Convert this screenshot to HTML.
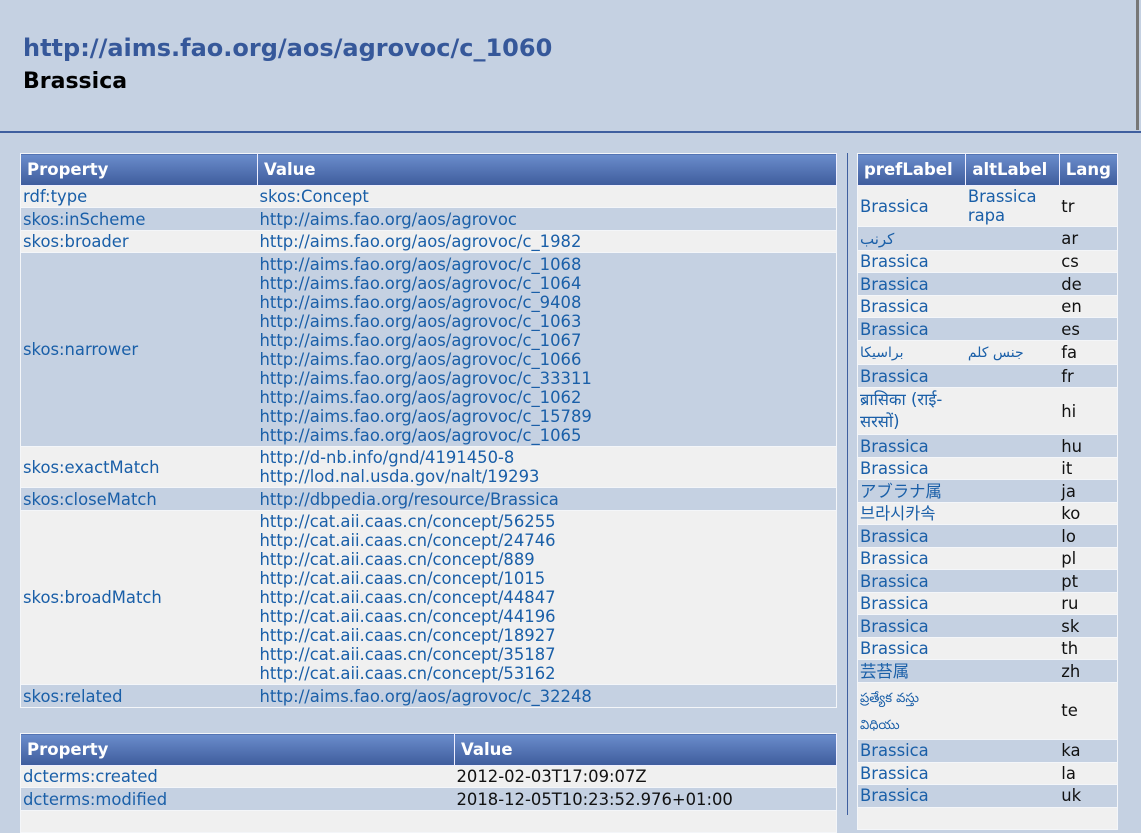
<!DOCTYPE html>
<html><head><meta charset="utf-8">
<style>
html,body{margin:0;padding:0;background:#c5d1e2;overflow:hidden;width:1141px;height:815px}
body{font-family:"DejaVu Sans","Liberation Sans","Noto Sans CJK JP",sans-serif;font-size:16.4px;color:#111}
#hd{height:131px;border-bottom:2px solid #3f5f9f;position:relative}
#hd .u{position:absolute;left:23px;top:34px;font-size:24px;font-weight:bold;color:#36589a}
#hd .t{position:absolute;left:23px;top:69px;font-size:22px;font-weight:bold;color:#000}
table{border-collapse:collapse;position:absolute;border:1px solid #f4f6f9}
th{background:linear-gradient(#6b8dcc,#3e5c9c);color:#fff;text-align:left;font-weight:bold;font-size:16.5px;height:31px;padding:0 6px;border-right:1px solid #eef;border-bottom:1px solid #eef}
td{padding:1.3px 2px 1.2px;line-height:19px;border-bottom:1px solid #f4f6f9;vertical-align:middle}
tr.o td{background:#f0f0f0}
tr.e td{background:#c5d1e2}
a{color:#1a5fa8;text-decoration:none}
#vl{position:absolute;left:847px;top:153px;width:1px;height:662px;background:#3f5f9f}
#sb{position:absolute;left:1136px;top:0;width:3px;height:130px;background:#777}
</style></head><body>
<div id="hd"><div class="u">http://aims.fao.org/aos/agrovoc/c_1060</div><div class="t">Brassica</div></div>
<div id="sb"></div>
<table style="left:20px;top:153px;width:817px">
<tr><th style="width:224px">Property</th><th>Value</th></tr>
<tr class="o"><td><a>rdf:type</a></td><td><a>skos:Concept</a></td></tr>
<tr class="e"><td><a>skos:inScheme</a></td><td><a>http://aims.fao.org/aos/agrovoc</a></td></tr>
<tr class="o"><td><a>skos:broader</a></td><td><a>http://aims.fao.org/aos/agrovoc/c_1982</a></td></tr>
<tr class="e"><td><a>skos:narrower</a></td><td><a>http://aims.fao.org/aos/agrovoc/c_1068</a><br><a>http://aims.fao.org/aos/agrovoc/c_1064</a><br><a>http://aims.fao.org/aos/agrovoc/c_9408</a><br><a>http://aims.fao.org/aos/agrovoc/c_1063</a><br><a>http://aims.fao.org/aos/agrovoc/c_1067</a><br><a>http://aims.fao.org/aos/agrovoc/c_1066</a><br><a>http://aims.fao.org/aos/agrovoc/c_33311</a><br><a>http://aims.fao.org/aos/agrovoc/c_1062</a><br><a>http://aims.fao.org/aos/agrovoc/c_15789</a><br><a>http://aims.fao.org/aos/agrovoc/c_1065</a></td></tr>
<tr class="o"><td><a>skos:exactMatch</a></td><td><a>http://d-nb.info/gnd/4191450-8</a><br><a>http://lod.nal.usda.gov/nalt/19293</a></td></tr>
<tr class="e"><td><a>skos:closeMatch</a></td><td><a>http://dbpedia.org/resource/Brassica</a></td></tr>
<tr class="o"><td><a>skos:broadMatch</a></td><td><a>http://cat.aii.caas.cn/concept/56255</a><br><a>http://cat.aii.caas.cn/concept/24746</a><br><a>http://cat.aii.caas.cn/concept/889</a><br><a>http://cat.aii.caas.cn/concept/1015</a><br><a>http://cat.aii.caas.cn/concept/44847</a><br><a>http://cat.aii.caas.cn/concept/44196</a><br><a>http://cat.aii.caas.cn/concept/18927</a><br><a>http://cat.aii.caas.cn/concept/35187</a><br><a>http://cat.aii.caas.cn/concept/53162</a></td></tr>
<tr class="e"><td><a>skos:related</a></td><td><a>http://aims.fao.org/aos/agrovoc/c_32248</a></td></tr>
</table>
<table style="left:20px;top:733px;width:817px">
<tr><th style="width:421px">Property</th><th>Value</th></tr>
<tr class="o"><td><a>dcterms:created</a></td><td>2012-02-03T17:09:07Z</td></tr>
<tr class="e"><td><a>dcterms:modified</a></td><td>2018-12-05T10:23:52.976+01:00</td></tr>
<tr class="o"><td>&nbsp;</td><td></td></tr>
</table>
<div id="vl"></div>
<table style="left:857px;top:153px;width:261px">
<tr><th style="width:96px">prefLabel</th><th style="width:81px">altLabel</th><th>Lang</th></tr>
<tr class="o"><td><a>Brassica</a></td><td><a>Brassica rapa</a></td><td>tr</td></tr>
<tr class="e"><td><a style="font-size:15px">كرنب</a></td><td></td><td>ar</td></tr>
<tr class="o"><td><a>Brassica</a></td><td></td><td>cs</td></tr>
<tr class="e"><td><a>Brassica</a></td><td></td><td>de</td></tr>
<tr class="o"><td><a>Brassica</a></td><td></td><td>en</td></tr>
<tr class="e"><td><a>Brassica</a></td><td></td><td>es</td></tr>
<tr class="o"><td><a style="font-size:14px">براسیکا</a></td><td><a style="font-size:14px">جنس کلم</a></td><td>fa</td></tr>
<tr class="e"><td><a>Brassica</a></td><td></td><td>fr</td></tr>
<tr class="o"><td style="line-height:22px"><a>ब्रासिका (राई-<br>सरसों)</a></td><td></td><td>hi</td></tr>
<tr class="e"><td><a>Brassica</a></td><td></td><td>hu</td></tr>
<tr class="o"><td><a>Brassica</a></td><td></td><td>it</td></tr>
<tr class="e"><td><a>アブラナ属</a></td><td></td><td>ja</td></tr>
<tr class="o"><td><a>브라시카속</a></td><td></td><td>ko</td></tr>
<tr class="e"><td><a>Brassica</a></td><td></td><td>lo</td></tr>
<tr class="o"><td><a>Brassica</a></td><td></td><td>pl</td></tr>
<tr class="e"><td><a>Brassica</a></td><td></td><td>pt</td></tr>
<tr class="o"><td><a>Brassica</a></td><td></td><td>ru</td></tr>
<tr class="e"><td><a>Brassica</a></td><td></td><td>sk</td></tr>
<tr class="o"><td><a>Brassica</a></td><td></td><td>th</td></tr>
<tr class="e"><td><a>芸苔属</a></td><td></td><td>zh</td></tr>
<tr class="o"><td style="line-height:25px"><a style="font-size:13px">ప్రత్యేక వస్తు<br>విధియు</a></td><td></td><td>te</td></tr>
<tr class="e"><td><a>Brassica</a></td><td></td><td>ka</td></tr>
<tr class="o"><td><a>Brassica</a></td><td></td><td>la</td></tr>
<tr class="e"><td><a>Brassica</a></td><td></td><td>uk</td></tr>
<tr class="o"><td>&nbsp;</td><td></td><td></td></tr>
</table>
</body></html>
